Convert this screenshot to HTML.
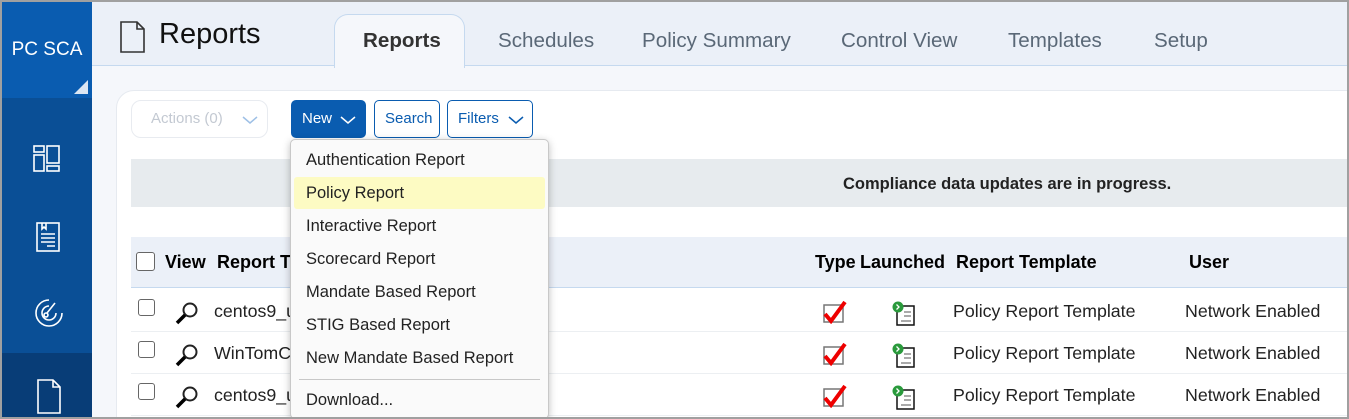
<!DOCTYPE html>
<html><head><meta charset="utf-8"><style>
*{box-sizing:border-box;margin:0;padding:0}
body{width:1349px;height:419px;overflow:hidden;font-family:"Liberation Sans",sans-serif;background:#a0a0a0;position:relative}
.frame{position:absolute;left:2px;top:2px;width:1345px;height:415px;background:#f5f7fb;overflow:hidden}
.abs{position:absolute}
.side{left:0;top:0;width:90px;height:415px;background:#0a4f96}
.sidetop{left:0;top:0;width:90px;height:96px;background:#0a5cb0;color:#fff;font-size:19px;text-align:center;padding-top:37px}
.hdr{left:90px;top:0;width:1255px;height:64px;background:#ebf0f8;border-bottom:1px solid #c5d9ef}
.tab{top:27px;font-size:20.6px;color:#5a6877}
.card{left:114px;top:88px;width:1240px;height:340px;background:#fff;border:1px solid #e6eaf0;border-radius:18px 0 0 0}
.btn{top:98px;height:38px;border:1px solid #0a5cb0;border-radius:5px;color:#0a5cb0;font-size:15px;line-height:36px;padding:0 10px}
.btn svg,.act svg{position:absolute;top:14px}
.menu{left:288px;top:137px;width:259px;height:280px;background:#fafafa;border:1px solid #c8c8c8;border-radius:5px;box-shadow:0 2px 8px rgba(0,0,0,.25)}
.mi{position:absolute;left:15px;font-size:16.5px;color:#222}
.th{font-size:18px;font-weight:bold;color:#000;top:250px}
.td{font-size:17.8px;color:#222}
.cb{width:17px;height:17px;border:1.5px solid #666;border-radius:3px;background:#fff}
</style></head><body>
<div class="frame">
<div class="abs side"></div>
<div class="abs sidetop">PC SCA</div>
<div class="abs" style="left:72px;top:78px;width:0;height:0;border-left:14px solid transparent;border-bottom:14px solid #dbe6f3"></div>
<div class="abs" style="left:0;top:351px;width:90px;height:64px;background:#083d77"></div>
<svg class="abs" style="left:30px;top:142px" width="30" height="30" fill="none" stroke="#fff" stroke-width="1.6"><rect x="2" y="2" width="10" height="6"/><rect x="2" y="11" width="10" height="16"/><rect x="15" y="2" width="12" height="17"/><rect x="15" y="22" width="12" height="5"/></svg>
<svg class="abs" style="left:33px;top:219px" width="26" height="32" fill="none" stroke="#fff" stroke-width="1.6"><rect x="2" y="2" width="22" height="28"/><path d="M7 2v6l2-2 2 2V2M6 13h14M6 17h14M6 21h14M12 25h8"/></svg>
<svg class="abs" style="left:31px;top:295px" width="32" height="32" fill="none" stroke="#fff" stroke-width="1.6"><path d="M16 3A13 13 0 1 0 29 16M16 9A7 7 0 1 0 23 16M14 16l8-10"/><circle cx="13" cy="18" r="2"/></svg>
<svg class="abs" style="left:34px;top:376px" width="26" height="36" fill="none" stroke="#fff" stroke-width="1.6"><path d="M2 2h15l7 7v26H2z M17 2v7h7"/></svg>
<div class="abs hdr"></div>
<svg class="abs" style="left:117px;top:18px" width="28" height="34" fill="none" stroke="#333" stroke-width="1.6"><path d="M2 2h16l7 7v23H2z M18 2v7h7"/></svg>
<div class="abs" style="left:157px;top:16px;font-size:29px;color:#111">Reports</div>
<div class="abs" style="left:332px;top:12px;width:131px;height:54px;background:#f5f7fb;border:1px solid #c5d9ef;border-bottom:none;border-radius:14px 14px 0 0"></div>
<div class="abs tab" style="left:361px;font-weight:bold;color:#333">Reports</div>
<div class="abs tab" style="left:496px">Schedules</div>
<div class="abs tab" style="left:640px">Policy Summary</div>
<div class="abs tab" style="left:839px">Control View</div>
<div class="abs tab" style="left:1006px">Templates</div>
<div class="abs tab" style="left:1152px">Setup</div>
<div class="abs card"></div>
<div class="abs act" style="left:129px;top:98px;width:137px;height:38px;border:1px solid #e8ebf0;border-radius:10px;color:#c3c9d2;font-size:15px;line-height:36px;padding-left:19px">Actions (0) <svg style="left:110px" width="16" height="10" fill="none" stroke="#9ec0e6" stroke-width="1.5"><path d="M1 2l7 6 7-6"/></svg></div>
<div class="abs btn" style="left:289px;width:75px;background:#0a5cb0;color:#fff">New <svg style="left:48px" width="16" height="10" fill="none" stroke="#fff" stroke-width="1.5"><path d="M1 2l7 6 7-6"/></svg></div>
<div class="abs btn" style="left:372px;width:66px">Search</div>
<div class="abs btn" style="left:445px;width:86px">Filters <svg style="left:60px" width="16" height="10" fill="none" stroke="#0a5cb0" stroke-width="1.5"><path d="M1 2l7 6 7-6"/></svg></div>
<div class="abs" style="left:129px;top:157px;width:1216px;height:48px;background:#e7ebee"></div>
<div class="abs" style="left:841px;top:173px;font-size:16.5px;font-weight:bold;color:#222">Compliance data updates are in progress.</div>
<div class="abs" style="left:129px;top:235px;width:1216px;height:51px;background:#ebf0f8;border-bottom:1px solid #c5d9ef"></div>
<div class="abs cb" style="left:134px;top:250px;width:19px;height:19px"></div>
<div class="abs th" style="left:163px">View</div>
<div class="abs th" style="left:215px">Report T</div>
<div class="abs th" style="left:813px">Type</div>
<div class="abs th" style="left:858px">Launched</div>
<div class="abs th" style="left:954px">Report Template</div>
<div class="abs th" style="left:1187px">User</div>
<div class="abs" style="left:129px;top:329px;width:1216px;height:1px;background:#eceff2"></div>
<div class="abs" style="left:129px;top:371px;width:1216px;height:1px;background:#eceff2"></div>
<div class="abs" style="left:129px;top:413px;width:1216px;height:1px;background:#eceff2"></div>
<div class="abs cb" style="left:136px;top:297px"></div>
<div class="abs cb" style="left:136px;top:339px"></div>
<div class="abs cb" style="left:136px;top:381px"></div>
<svg class="abs" style="left:172px;top:298px" width="26" height="26"><circle cx="16" cy="10" r="6.5" fill="none" stroke="#222" stroke-width="2"/><path d="M11 15L3 23" stroke="#000" stroke-width="3.5"/></svg>
<svg class="abs" style="left:172px;top:340px" width="26" height="26"><circle cx="16" cy="10" r="6.5" fill="none" stroke="#222" stroke-width="2"/><path d="M11 15L3 23" stroke="#000" stroke-width="3.5"/></svg>
<svg class="abs" style="left:172px;top:382px" width="26" height="26"><circle cx="16" cy="10" r="6.5" fill="none" stroke="#222" stroke-width="2"/><path d="M11 15L3 23" stroke="#000" stroke-width="3.5"/></svg>
<div class="abs td" style="left:212px;top:299px">centos9_u</div>
<div class="abs td" style="left:212px;top:341px">WinTomC</div>
<div class="abs td" style="left:212px;top:383px">centos9_u</div>
<svg class="abs" style="left:820px;top:298px" width="26" height="24"><rect x="2" y="5" width="19" height="17" fill="#fff" stroke="#777" stroke-width="1.5"/><path d="M3 14l6 7L23 2" fill="none" stroke="#e00" stroke-width="4"/></svg>
<svg class="abs" style="left:820px;top:340px" width="26" height="24"><rect x="2" y="5" width="19" height="17" fill="#fff" stroke="#777" stroke-width="1.5"/><path d="M3 14l6 7L23 2" fill="none" stroke="#e00" stroke-width="4"/></svg>
<svg class="abs" style="left:820px;top:382px" width="26" height="24"><rect x="2" y="5" width="19" height="17" fill="#fff" stroke="#777" stroke-width="1.5"/><path d="M3 14l6 7L23 2" fill="none" stroke="#e00" stroke-width="4"/></svg>
<svg class="abs" style="left:889px;top:299px" width="26" height="26"><rect x="6" y="5" width="17" height="19" fill="#fff" stroke="#111" stroke-width="1.5"/><path d="M13 11h7M13 15h7M10 20h10" stroke="#555"/><circle cx="7" cy="6" r="5.5" fill="#2a9a3c"/><path d="M5.5 3.5l2.5 2.5-2.5 2.5" stroke="#fff" fill="none" stroke-width="1.3"/></svg>
<svg class="abs" style="left:889px;top:341px" width="26" height="26"><rect x="6" y="5" width="17" height="19" fill="#fff" stroke="#111" stroke-width="1.5"/><path d="M13 11h7M13 15h7M10 20h10" stroke="#555"/><circle cx="7" cy="6" r="5.5" fill="#2a9a3c"/><path d="M5.5 3.5l2.5 2.5-2.5 2.5" stroke="#fff" fill="none" stroke-width="1.3"/></svg>
<svg class="abs" style="left:889px;top:383px" width="26" height="26"><rect x="6" y="5" width="17" height="19" fill="#fff" stroke="#111" stroke-width="1.5"/><path d="M13 11h7M13 15h7M10 20h10" stroke="#555"/><circle cx="7" cy="6" r="5.5" fill="#2a9a3c"/><path d="M5.5 3.5l2.5 2.5-2.5 2.5" stroke="#fff" fill="none" stroke-width="1.3"/></svg>
<div class="abs td" style="left:951px;top:299px">Policy Report Template</div>
<div class="abs td" style="left:951px;top:341px">Policy Report Template</div>
<div class="abs td" style="left:951px;top:383px">Policy Report Template</div>
<div class="abs td" style="left:1183px;top:299px">Network Enabled</div>
<div class="abs td" style="left:1183px;top:341px">Network Enabled</div>
<div class="abs td" style="left:1183px;top:383px">Network Enabled</div>
<div class="abs menu">
<div class="abs" style="left:3px;top:37px;width:251px;height:32px;background:#fdfbc3;border-radius:3px"></div>
<div class="mi" style="top:11px">Authentication Report</div>
<div class="mi" style="top:44px">Policy Report</div>
<div class="mi" style="top:77px">Interactive Report</div>
<div class="mi" style="top:110px">Scorecard Report</div>
<div class="mi" style="top:143px">Mandate Based Report</div>
<div class="mi" style="top:176px">STIG Based Report</div>
<div class="mi" style="top:209px">New Mandate Based Report</div>
<div class="abs" style="left:8px;top:239px;width:241px;height:1px;background:#c8c8c8"></div>
<div class="mi" style="top:251px">Download...</div>
</div>
</div>
</body></html>
